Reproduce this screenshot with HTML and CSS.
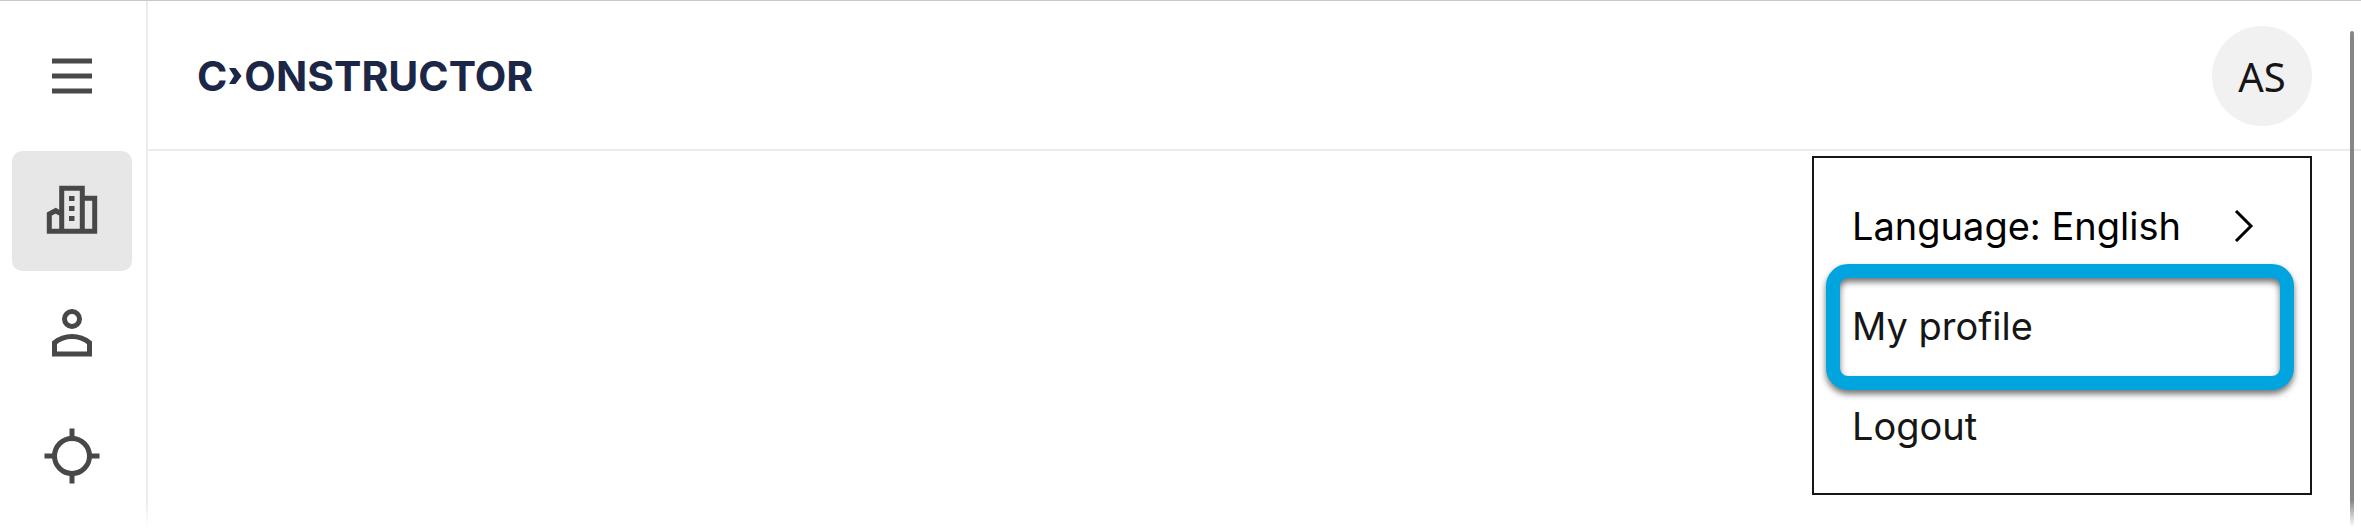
FILE: index.html
```html
<!DOCTYPE html>
<html lang="en">
<head>
  <meta charset="UTF-8">
  <title>Constructor</title>
  <meta name="viewport" content="width=device-width, initial-scale=1.0">
  <link rel="stylesheet" href="styles.css">
</head>
<body>

  <nav class="sidebar" aria-label="Main">
    <button class="menu-toggle" aria-label="Open menu">
      <svg class="icon" viewBox="0 0 60 60">
        <path d="M10 15h40M10 30h40M10 45h40" />
      </svg>
    </button>
    <a href="#" class="nav-item active" aria-label="Organization">
      <svg class="icon" viewBox="0 0 60 60">
        <path d="M19.7 50.3H7.3V33L13.7 29.7L19.7 33M19.7 50.3V7.3H40.3V50.3zM40.3 17.3H52.7V50.3H40.3" />
        <path class="solid" d="M27 15h5.5v5H27zM27 25h5.5v5H27zM27 35h5.5v5H27z" />
      </svg>
    </a>
    <a href="#" class="nav-item" aria-label="Users">
      <svg class="icon" viewBox="0 0 60 60">
        <circle cx="30" cy="16" r="7.5" />
        <path d="M12.5 51V39.7Q20 33.5 30 33.5T47.5 39.7V51z" />
      </svg>
    </a>
    <a href="#" class="nav-item" aria-label="Target">
      <svg class="icon" viewBox="0 0 60 60">
        <circle cx="30" cy="31" r="17.5" />
        <path d="M30 3.5v10M30 48.5v10M2.5 31h10M47.5 31h10" />
      </svg>
    </a>
  </nav>

  <div class="page">
    <header class="header">
      <a href="#" class="logo" aria-label="Constructor">
        <span>C</span>
        <svg class="logo-arrow" viewBox="0 0 13 16">
          <path d="M0 0h6.5l6 8l-6 8H0l5-8z" />
        </svg>
        <span>ONSTRUCTOR</span>
      </a>

      <div class="account">
        <button class="avatar" aria-expanded="true">AS</button>
        <div class="account-menu">
          <button class="menu-item language">
            Language: English
            <svg class="chevron" viewBox="0 0 20 32">
              <path d="M2 1L17 16L2 31" />
            </svg>
          </button>
          <a href="#" class="menu-item highlighted">My profile</a>
          <button class="menu-item">Logout</button>
        </div>
      </div>
    </header>
    <main class="content"></main>
  </div>

  <div class="scroll-thumb"></div>

</body>
</html>
```

FILE: styles.css
```css
* {
  margin: 0;
  padding: 0;
  box-sizing: border-box;
}

body {
  position: relative;
  display: flex;
  min-height: 100vh;
  overflow: hidden;
  border-top: 1px solid #c8c8c8;
  background-color: #fff;
  color: #161616;
  font-family: Inter, "Liberation Sans", sans-serif;
}

/* content fades out at the bottom edge */
body::after {
  content: "";
  position: absolute;
  left: 0;
  right: 0;
  bottom: 0;
  height: 30px;
  background: linear-gradient(rgba(255, 255, 255, 0), #fff 90%);
}

button {
  border: none;
  background: none;
  color: inherit;
  font-family: inherit;
  cursor: pointer;
}

a {
  color: inherit;
  text-decoration: none;
}

.sidebar {
  display: flex;
  flex-direction: column;
  gap: 2px;
  flex: none;
  width: 148px;
  padding: 0 14px 0 12px;
  border-right: 2px solid #ebebeb;
}

.menu-toggle,
.nav-item {
  display: flex;
  align-items: center;
  justify-content: center;
  height: 120px;
  border-radius: 10px;
}

.menu-toggle {
  height: 148px;
  padding-top: 2px;
}

.nav-item.active {
  background-color: #e7e7e7;
}

.icon {
  width: 60px;
  height: 60px;
  fill: none;
  stroke: #484848;
  stroke-width: 5;
}

.icon .solid {
  fill: #484848;
  stroke: none;
}

.page {
  flex: 1;
  display: flex;
  flex-direction: column;
}

.header {
  display: flex;
  align-items: center;
  justify-content: space-between;
  height: 150px;
  padding: 2px 49px 0;
  border-bottom: 2px solid #ebebeb;
}

.logo {
  display: flex;
  align-items: center;
  gap: 2px;
  color: #1c2747;
  font-size: 41px;
  font-weight: 700;
  line-height: 48px;
}

.logo-arrow {
  width: 13px;
  height: 16px;
  fill: #1c2747;
}

.account {
  position: relative;
}

.avatar {
  width: 100px;
  height: 100px;
  border-radius: 50%;
  background-color: #f1f1f1;
  font-family: "Noto Sans", sans-serif;
  font-size: 40px;
}

.account-menu {
  position: absolute;
  top: 130px;
  right: 0;
  width: 500px;
  padding: 18px 0 17px;
  border: 2px solid #161616;
  background-color: #fff;
}

.menu-item {
  position: relative;
  display: flex;
  align-items: center;
  justify-content: space-between;
  width: 100%;
  height: 100px;
  padding: 0 56px 0 38px;
  font-size: 38px;
  text-align: left;
}

.language {
  color: #000;
}

.chevron {
  width: 20px;
  height: 32px;
  fill: none;
  stroke: #000;
  stroke-width: 3;
}

.highlighted::after {
  content: "";
  position: absolute;
  top: -12px;
  right: 16px;
  bottom: -14px;
  left: 12px;
  border: 14px solid #00a5e0;
  border-radius: 22px;
  filter: drop-shadow(0 4px 3px rgba(0, 0, 0, 0.55));
}

.scroll-thumb {
  position: absolute;
  top: 30px;
  right: 7px;
  bottom: 0;
  width: 4px;
  border-radius: 2px;
  background-color: #868686;
}
```
